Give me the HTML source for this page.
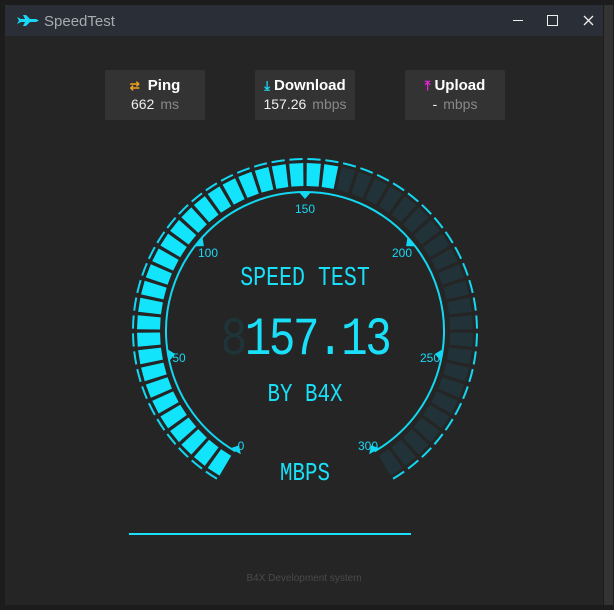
<!DOCTYPE html>
<html><head><meta charset="utf-8"><style>
html,body{margin:0;padding:0;width:614px;height:610px;background:#1c1c1c;overflow:hidden;font-family:"Liberation Sans",sans-serif}
#win{position:absolute;left:5px;top:5px;width:598px;height:600px;background:#252525}
#title{position:absolute;left:0;top:0;width:598px;height:31px;background:#2a2e36}
#title .t{position:absolute;left:39px;top:8px;color:#a8abb0;font-size:15px}
.card{position:absolute;top:65px;width:100px;height:50px;background:#333;border-radius:2px;color:#fff;text-align:center}
.card .h{font-weight:bold;font-size:15px;margin-top:7px}
.card .v{font-size:14px;margin-top:2px;color:#eee}
.card .v span{color:#888;margin-left:6px}
.lcd{position:absolute;font-family:"Liberation Mono",monospace;color:#19e0f8;text-align:center}
#sb{position:absolute;left:604px;top:5px;width:9px;height:600px;background:#333}
</style></head><body>
<div id="sb"></div>
<div id="win">
 <div id="title">
  <svg style="position:absolute;left:12px;top:10px" width="22" height="11" viewBox="0 0 22 11"><path d="M0 2 L4 4 L8 4 L6 0 L9 0 L13 4 L19 4 L22 5.5 L19 7 L13 7 L9 11 L6 11 L8 7 L4 7 L0 9 L2 5.5Z" fill="#19d8f5"/></svg>
  <div class="t">SpeedTest</div>
  <div style="position:absolute;left:508px;top:15px;width:10px;height:1px;background:#eee"></div>
  <div style="position:absolute;left:542px;top:10px;width:9px;height:9px;border:1px solid #eee"></div>
  <svg style="position:absolute;left:578px;top:10px" width="11" height="11"><path d="M1 1L10 10M10 1L1 10" stroke="#eee" stroke-width="1.3"/></svg>
 </div>
 <div class="card" style="left:100px"><div class="h"><span style="color:#f0a020;font-size:12px;margin-right:8px">⇄</span>Ping</div><div class="v">662<span>ms</span></div></div>
 <div class="card" style="left:250px"><div class="h"><span style="color:#19d8f5;font-size:13px;margin-right:4px">⤓</span>Download</div><div class="v">157.26<span>mbps</span></div></div>
 <div class="card" style="left:400px"><div class="h"><span style="color:#f020e0;font-size:13px;margin-right:4px">⤒</span>Upload</div><div class="v">-<span>mbps</span></div></div>
 <svg id="g" style="position:absolute;left:-5px;top:-5px" width="614" height="610"></svg>
 <div class="lcd" style="left:200px;top:259px;width:200px;font-size:27px;transform:scaleX(0.8)">SPEED TEST</div>
 <div class="lcd" style="left:195px;top:305px;width:210px;font-size:54px;letter-spacing:-3px;transform:scaleX(0.82)"><span style="color:#1f3438">8</span>157.13</div>
 <div class="lcd" style="left:230px;top:374px;width:140px;font-size:26px;transform:scaleX(0.8)">BY B4X</div>
 <div class="lcd" style="left:250px;top:453px;width:100px;font-size:26px;transform:scaleX(0.8)">MBPS</div>
 <div style="position:absolute;left:124px;top:528px;width:282px;height:2px;background:#19e0f8"></div>
 <div style="position:absolute;left:0;top:568px;width:598px;text-align:center;color:#4a4a4a;font-size:10px">B4X Development system</div>
</div>
<script>
var s='',cx=305,cy=331;
function P(a,r){var t=a*Math.PI/180;return [cx+r*Math.sin(t),cy-r*Math.cos(t)];}
for(var i=0;i<50;i++){var a0=-150+i*6+0.6,a1=a0+4.8;var c=(i<27)?'#12e4fb':'#213338';
var p1=P(a0,145),p2=P(a0,168),p3=P(a1,168),p4=P(a1,145);
s+='<path d="M'+p1+'L'+p2+'L'+p3+'L'+p4+'Z" fill="'+c+'"/>';}
for(var i=0;i<50;i++){var a0=-150+i*6+0.8,a1=a0+4.4;var p1=P(a0,172),p2=P(a1,172);
s+='<path d="M'+p1+'A172 172 0 0 1 '+p2+'" stroke="#12d8f2" stroke-width="2" fill="none"/>';}
var q1=P(-150,139),q2=P(150,139);
s+='<path d="M'+q1+'A139 139 0 1 1 '+q2+'" stroke="#12d8f2" stroke-width="2" fill="none"/>';
var pos={0:[241,450],50:[179,362],100:[208,257],150:[305,213],200:[402,257],250:[430,362],300:[368,450]};
[0,50,100,150,200,250,300].forEach(function(v){var a=v-150;var b=P(a,139),l=P(a-3,134),r=P(a+3,134),t=P(a,132);
s+='<path d="M'+P(a-2.5,139)+'L'+P(a+2.5,139)+'L'+t+'Z" fill="#12d8f2"/>';
s+='<text x="'+pos[v][0]+'" y="'+pos[v][1]+'" fill="#19d8f5" font-size="12" font-family="Liberation Sans" text-anchor="middle">'+v+'</text>';});
document.getElementById('g').innerHTML=s;
</script>
</body></html>
